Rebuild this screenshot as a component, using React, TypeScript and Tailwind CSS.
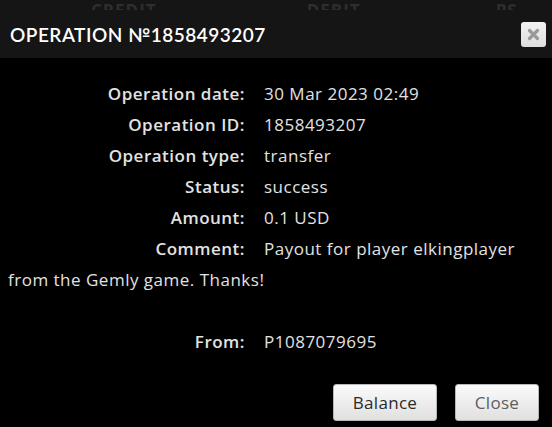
export default function App() {
  const rows = [
    ["Operation date:", "30 Mar 2023 02:49"],
    ["Operation ID:", "1858493207"],
    ["Operation type:", "transfer"],
    ["Status:", "success"],
    ["Amount:", "0.1 USD"],
  ];

  return (
    <div className="w-[552px] h-[427px] overflow-hidden bg-black text-[#e2e2e2] font-['Open_Sans',sans-serif]">
      {/* header */}
      <div className="h-[58px] bg-[#151515]">
        <div className="h-[10px] overflow-hidden flex text-[#2e2e2e] font-bold text-[17px] leading-[16px] tracking-[1px] pt-[3px]">
          <span className="ml-[91px]">CREDIT</span>
          <span className="ml-[150px]">DEBIT</span>
          <span className="ml-[135px]">PS</span>
        </div>
        <div className="flex items-center justify-between h-[48px] pl-[10px] pr-[6px]">
          <h1 className="text-white text-[19px] font-semibold tracking-[0.5px] font-['Lato',sans-serif] leading-none">
            OPERATION №1858493207
          </h1>
          <button className="w-[25px] h-[25px] rounded-[3px] bg-gradient-to-b from-[#f2f2f2] to-[#dedede] flex items-center justify-center">
            <svg width="13" height="13" viewBox="0 0 13 13">
              <path d="M2.5 2.5 L10.5 10.5 M10.5 2.5 L2.5 10.5" stroke="#9a9a9a" strokeWidth="3.2" strokeLinecap="round" />
            </svg>
          </button>
        </div>
      </div>

      {/* body */}
      <div className="px-[8px] pt-[20px] text-[17px] leading-[31px] tracking-[0.5px]">
        {rows.map(([k, v]) => (
          <div key={k}>
            <span className="inline-block w-[237px] text-right font-semibold mr-[19px]">{k}</span>
            <span>{v}</span>
          </div>
        ))}
        <p>
          <span className="inline-block w-[237px] text-right font-semibold mr-[19px]">Comment:</span>
          Payout for player elkingplayer from the Gemly game. Thanks!
        </p>
        <div className="h-[31px]" />
        <div>
          <span className="inline-block w-[237px] text-right font-semibold mr-[19px]">From:</span>
          <span>P1087079695</span>
        </div>
      </div>

      {/* footer */}
      <div className="flex justify-end gap-[18px] pr-[13px] mt-[27px]">
        <button className="w-[104px] h-[37px] rounded-[3px] border border-[#b8b8b8] bg-gradient-to-b from-[#fbfbfb] to-[#e0e0e0] text-[#2a2a2a] text-[17px] tracking-[0.3px]">
          Balance
        </button>
        <button className="w-[84px] h-[37px] rounded-[3px] border border-[#b8b8b8] bg-gradient-to-b from-[#fbfbfb] to-[#e0e0e0] text-[#5e5e5e] text-[17px] tracking-[0.3px]">
          Close
        </button>
      </div>
    </div>
  );
}
